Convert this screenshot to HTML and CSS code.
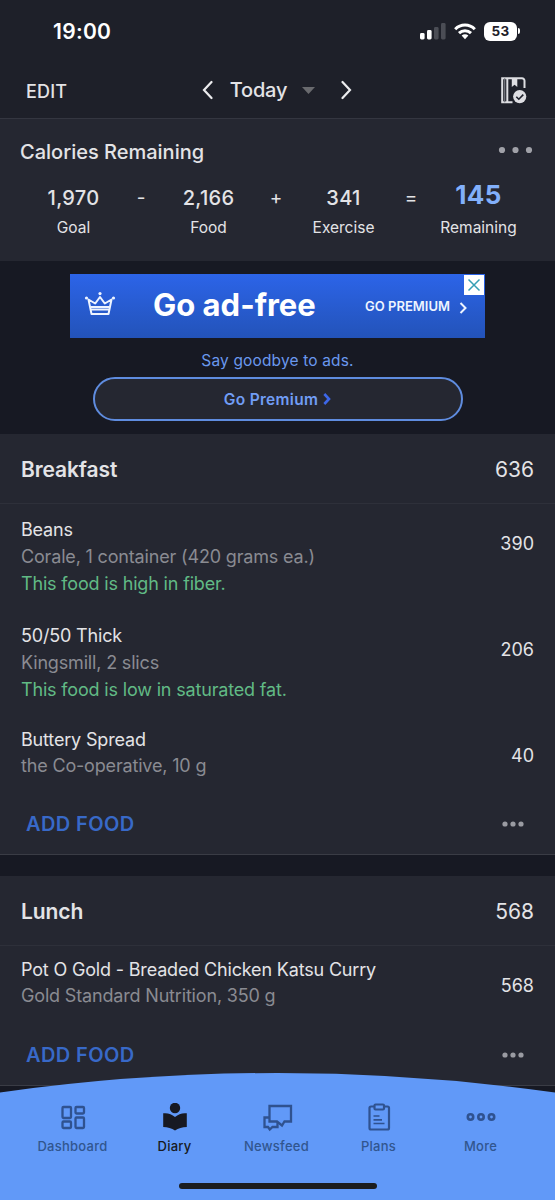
FILE: index.html
```html
<!DOCTYPE html>
<html lang="en">
<head>
    <meta charset="UTF-8">
    <meta name="viewport" content="width=device-width, initial-scale=1.0">
    <title>Diary</title>
    <link rel="stylesheet" href="styles.css">
</head>
<body>
    <div class="app">
        <header class="top">
            <div class="status-bar">
                <span class="clock">19:00</span>
                <div class="status-icons">
                    <svg width="26" height="17" viewBox="0 0 26 17">
                        <rect x="0" y="10" width="4.6" height="6.5" rx="1.4" fill="#fff"/>
                        <rect x="7" y="7" width="4.6" height="9.5" rx="1.4" fill="#fff"/>
                        <rect x="14" y="4" width="4.6" height="12.5" rx="1.4" fill="#4b4d55"/>
                        <rect x="21" y="0" width="4.6" height="16.5" rx="1.4" fill="#4b4d55"/>
                    </svg>
                    <svg class="wifi" width="22" height="17" viewBox="0 0 22 17" fill="none" stroke="#fff" stroke-width="3">
                        <path d="M1.2 6.2C6.6 .6 15.4.6 20.8 6.2"/>
                        <path d="M5 10.1C8.4 6.8 13.6 6.8 17 10.1"/>
                        <path d="M7.6 12.6c2-1.8 4.8-1.8 6.8 0L11 16.3z" fill="#fff" stroke="none"/>
                    </svg>
                    <span class="battery">53</span>
                    <span class="battery-tip"></span>
                </div>
            </div>
            <nav class="date-bar">
                <span class="edit">EDIT</span>
                <div class="date-picker">
                    <svg width="11" height="20" viewBox="0 0 11 20" fill="none" stroke="#ececee" stroke-width="2.2" stroke-linecap="round"><path d="M9.5 2 2 10l7.5 8"/></svg>
                    <span class="today">Today</span>
                    <svg class="caret" width="13" height="7" viewBox="0 0 13 7"><path d="M0 0h13L6.5 7z" fill="#696a6e"/></svg>
                    <svg width="11" height="20" viewBox="0 0 11 20" fill="none" stroke="#ececee" stroke-width="2.2" stroke-linecap="round"><path d="M1.5 2 9 10l-7.5 8"/></svg>
                </div>
                <svg class="journal" width="26" height="27" viewBox="0 0 26 27">
                    <path d="M11.5 25.200H1.200V1.200H21a2.500 2.500 0 0 1 2.500 2.500V11M6.300 1.200v24" fill="none" stroke="#dedee2" stroke-width="2"/>
                    <path d="M3.700 1.200v24" stroke="#777981" stroke-width="1.2"/>
                    <path d="M10.800 1.500h5.500v8.500l-2.750-2.300L10.800 10z" fill="#dedee2"/>
                    <circle cx="18.700" cy="19.600" r="6.600" fill="#dedee2"/>
                    <path d="m15.300 19.700 2.500 2.500 4.500-4.600" fill="none" stroke="#1f212b" stroke-width="1.600"/>
                </svg>
            </nav>
        </header>

        <section class="summary">
            <div class="summary-head">
                <h2>Calories Remaining</h2>
                <svg width="35" height="8" viewBox="0 0 35 8" fill="#a0a1a8"><circle cx="4" cy="4" r="3.1"/><circle cx="17.5" cy="4" r="3.1"/><circle cx="31" cy="4" r="3.1"/></svg>
            </div>
            <div class="equation">
                <div class="term"><b>1,970</b><span>Goal</span></div>
                <i>-</i>
                <div class="term"><b>2,166</b><span>Food</span></div>
                <i>+</i>
                <div class="term"><b>341</b><span>Exercise</span></div>
                <i>=</i>
                <div class="term total"><b>145</b><span>Remaining</span></div>
            </div>
        </section>

        <section class="promo">
            <div class="banner">
                <svg class="crown" width="32" height="26" viewBox="0 0 32 26" fill="none" stroke="#eef4ff" stroke-width="2" stroke-linejoin="round">
                    <path d="M4.500 8.500 7.500 23h17L27.500 8.500 20.800 12.500 16 6l-4.800 6.500zM7 18.500h18M7 16h18"/>
                    <g fill="#eef4ff" stroke="none"><circle cx="2.500" cy="7" r="1.600"/><circle cx="16" cy="2.600" r="1.600"/><circle cx="29.500" cy="7" r="1.600"/></g>
                </svg>
                <strong>Go ad-free</strong>
                <span class="banner-cta">GO PREMIUM</span>
                <svg class="banner-arrow" width="8" height="12" viewBox="0 0 8 12" fill="none" stroke="#eef4ff" stroke-width="2"><path d="m1.500 1 5 5-5 5"/></svg>
                <span class="close"><svg width="14" height="14" viewBox="0 0 14 14" stroke="#369fb4" stroke-width="1.5"><path d="m1.500 1.500 11 11m0-11-11 11"/></svg></span>
            </div>
            <p class="promo-text">Say goodbye to ads.</p>
            <div class="premium-button">
                <span>Go Premium</span>
                <svg width="8" height="12" viewBox="0 0 8 12" fill="none" stroke="#3d67e8" stroke-width="2.6"><path d="m1.300 1 4.700 5-4.700 5"/></svg>
            </div>
        </section>

        <section class="meal">
            <div class="meal-head"><h3>Breakfast</h3><span>636</span></div>
            <div class="food">
                <div>
                    <p class="name">Beans</p>
                    <p class="detail">Corale, 1 container (420 grams ea.)</p>
                    <p class="note">This food is high in fiber.</p>
                </div>
                <span class="kcal">390</span>
            </div>
            <div class="food">
                <div>
                    <p class="name">50/50 Thick</p>
                    <p class="detail">Kingsmill, 2 slics</p>
                    <p class="note">This food is low in saturated fat.</p>
                </div>
                <span class="kcal">206</span>
            </div>
            <div class="food short">
                <div>
                    <p class="name">Buttery Spread</p>
                    <p class="detail">the Co-operative, 10 g</p>
                </div>
                <span class="kcal">40</span>
            </div>
            <div class="meal-foot">
                <span>ADD FOOD</span>
                <svg width="22" height="6" viewBox="0 0 22 6" fill="#9a9ba2"><circle cx="3" cy="3" r="2.6"/><circle cx="11" cy="3" r="2.6"/><circle cx="19" cy="3" r="2.6"/></svg>
            </div>
        </section>

        <section class="meal lunch">
            <div class="meal-head"><h3>Lunch</h3><span>568</span></div>
            <div class="food short">
                <div>
                    <p class="name">Pot O Gold - Breaded Chicken Katsu Curry</p>
                    <p class="detail">Gold Standard Nutrition, 350 g</p>
                </div>
                <span class="kcal">568</span>
            </div>
            <div class="meal-foot">
                <span>ADD FOOD</span>
                <svg width="22" height="6" viewBox="0 0 22 6" fill="#9a9ba2"><circle cx="3" cy="3" r="2.6"/><circle cx="11" cy="3" r="2.6"/><circle cx="19" cy="3" r="2.6"/></svg>
            </div>
        </section>

        <footer class="tab-bar">
            <svg class="curve" width="555" height="127" viewBox="0 0 555 127"><path d="M0 19.500Q138 0 277.500 0T555 19.500V127H0z" fill="#6199f8"/></svg>
            <div class="tabs">
                <div class="tab">
                    <svg width="32" height="30" viewBox="0 0 32 30" fill="none" stroke="#2f5290" stroke-width="2.3">
                        <rect x="5.500" y="4" width="8.500" height="11" rx="1"/><rect x="18.500" y="4" width="8.500" height="6.500" rx="1"/>
                        <rect x="5.500" y="18.500" width="8.500" height="6.500" rx="1"/><rect x="18.500" y="14.500" width="8.500" height="10.500" rx="1"/>
                    </svg>
                    <span>Dashboard</span>
                </div>
                <div class="tab active">
                    <svg width="32" height="30" viewBox="0 0 32 30" fill="#171922">
                        <circle cx="16" cy="5" r="5.200"/>
                        <path d="M4.200 10.300Q11 9.500 16 14q5-4.500 11.800-3.700V24Q21 24 16 27.500 11 24 4.200 24z"/>
                    </svg>
                    <span>Diary</span>
                </div>
                <div class="tab">
                    <svg width="32" height="30" viewBox="0 0 32 30" fill="none" stroke="#2f5290" stroke-width="2.3">
                        <path d="M8.500 3h21.500v15.500h-6.500l-2.500 4-5-4H8.500z"/>
                        <path d="M8.500 14.500H3.500v9.500h3.500l1.800 2.500 2.700-2.500h5v-5"/>
                    </svg>
                    <span>Newsfeed</span>
                </div>
                <div class="tab">
                    <svg width="32" height="30" viewBox="0 0 32 30" fill="none" stroke="#2f5290" stroke-width="2.2">
                        <rect x="6.500" y="3.500" width="19.500" height="23" rx="1.500"/>
                        <rect x="11.500" y="1.500" width="9.500" height="5" rx="1" fill="#6199f8"/>
                        <path d="M10.500 13h6m-6 3.800h8.500m-8.500 3.700h11" stroke-width="1.700"/>
                    </svg>
                    <span>Plans</span>
                </div>
                <div class="tab">
                    <svg width="32" height="30" viewBox="0 0 32 30" fill="none" stroke="#2f5290" stroke-width="2.6"><circle cx="5.500" cy="14" r="2.700"/><circle cx="16" cy="14" r="2.700"/><circle cx="26.500" cy="14" r="2.700"/></svg>
                    <span>More</span>
                </div>
            </div>
            <div class="home-indicator"></div>
        </footer>
    </div>
</body>
</html>
```
FILE: styles.css
```css
* {
    box-sizing: border-box;
}

body {
    margin: 0;
    background: #171923;
    color: #e3e3e6;
    font-family: Inter, "Liberation Sans", sans-serif;
}

h2, h3, p {
    margin: 0;
}

svg {
    display: block;
    flex-shrink: 0;
}

.app {
    position: relative;
    width: 555px;
    height: 1200px;
    overflow: hidden;
}

/* status bar and date picker */
.top {
    height: 119px;
    background: #1e2029;
    border-bottom: 1px solid #343640;
}

.status-bar {
    display: flex;
    justify-content: space-between;
    align-items: center;
    height: 62px;
    padding: 0 35px 0 53px;
}

.clock {
    color: #fff;
    font-size: 21px;
    font-weight: 600;
    letter-spacing: 0.3px;
}

.status-icons {
    display: flex;
    align-items: center;
}

.wifi {
    margin-left: 8px;
}

.battery {
    width: 33px;
    height: 19px;
    margin-left: 8px;
    border-radius: 6px;
    background: #fff;
    color: #1e2029;
    font-size: 13.5px;
    font-weight: 700;
    letter-spacing: 0.4px;
    line-height: 19px;
    text-align: center;
}

.battery-tip {
    width: 2px;
    height: 6px;
    margin-left: 1px;
    border-radius: 0 2px 2px 0;
    background: #fff;
}

.date-bar {
    display: grid;
    grid-template-columns: 1fr auto 1fr;
    align-items: center;
    height: 56px;
    padding: 0 28px 0 26px;
}

.edit {
    padding-top: 2px;
    font-size: 18px;
    font-weight: 500;
    letter-spacing: 0.2px;
}

.date-picker {
    display: flex;
    align-items: center;
    margin-left: 1px;
}

.today {
    margin-left: 17px;
    font-size: 20px;
    font-weight: 500;
    letter-spacing: -0.2px;
}

.caret {
    margin: 0 26px 0 15px;
}

.journal {
    justify-self: end;
}

/* calories equation */
.summary {
    height: 142px;
    padding: 19px 20px 0;
    background: #252731;
}

.summary-head {
    display: flex;
    justify-content: space-between;
    align-items: center;
    height: 27px;
    padding-right: 2px;
}

.summary-head svg {
    margin-bottom: 4px;
}

.summary-head h2 {
    font-size: 20px;
    font-weight: 500;
}

.equation {
    display: grid;
    grid-template-columns: 107px 28px 107px 28px 107px 28px 107px;
    margin-top: 16px;
}

.equation i {
    font-size: 19px;
    font-style: normal;
    line-height: 34px;
    text-align: center;
}

.term {
    display: flex;
    flex-direction: column;
    align-items: center;
}

.term b {
    height: 34px;
    font-size: 20px;
    font-weight: 500;
    letter-spacing: 0.3px;
    line-height: 34px;
}

.term span {
    font-size: 15.5px;
    line-height: 25px;
}

.total b {
    color: #82b0fb;
    font-size: 26px;
    font-weight: 700;
    line-height: 28px;
}

/* ad block */
.promo {
    display: flex;
    flex-direction: column;
    align-items: center;
    height: 173px;
    padding-top: 13px;
}

.banner {
    position: relative;
    display: flex;
    align-items: center;
    width: 415px;
    height: 64px;
    padding: 0 18px 4px 14px;
    background: linear-gradient(#2c64e8, #2353b9);
    color: #eef4ff;
}

.banner strong {
    margin-left: 37px;
    color: #fff;
    font-size: 31px;
    font-weight: 700;
}

.banner-cta {
    margin-left: auto;
    padding-top: 4px;
    font-size: 13px;
    font-weight: 600;
}

.banner-arrow {
    margin: 7px 0 0 9px;
}

.close {
    position: absolute;
    top: 1px;
    right: 1px;
    padding: 3px;
    background: #fff;
}

.promo-text {
    margin-top: 13px;
    color: #6a98ee;
    font-size: 15.5px;
    letter-spacing: 0.15px;
    line-height: 20px;
}

.premium-button {
    display: flex;
    justify-content: center;
    align-items: center;
    gap: 5px;
    width: 370px;
    height: 44px;
    margin-top: 6px;
    border: 2px solid #5f8cdf;
    border-radius: 22px;
    background: #252731;
    color: #719df5;
    font-size: 15.5px;
    font-weight: 600;
    letter-spacing: 0.3px;
}

/* meals */
.meal {
    height: 421px;
    border-bottom: 1px solid #3a3c45;
    background: #252731;
}

.lunch {
    height: 210px;
    margin-top: 21px;
}

.meal-head {
    display: flex;
    justify-content: space-between;
    align-items: center;
    height: 70px;
    padding: 2px 21px 0;
    border-bottom: 1px solid #2e303a;
    font-size: 21px;
}

.meal-head h3 {
    font-size: 21px;
    font-weight: 600;
    letter-spacing: -0.1px;
}

.food {
    display: flex;
    justify-content: space-between;
    height: 106px;
    padding: 12px 21px 0;
    font-size: 18px;
    letter-spacing: -0.17px;
    line-height: 27px;
}

.detail {
    color: #8a8b92;
}

.note {
    color: #61ba85;
}

.kcal {
    padding-top: 14px;
    letter-spacing: 0;
}

.short {
    height: 94px;
    padding-top: 11px;
    line-height: 26px;
}

.short .kcal {
    padding-top: 16px;
}

.meal-foot {
    display: flex;
    justify-content: space-between;
    align-items: center;
    padding: 0 31px 0 26px;
}

.lunch .meal-foot {
    padding-top: 1px;
}

.meal-foot span {
    color: #3869c8;
    font-size: 20px;
    font-weight: 600;
    letter-spacing: 0.4px;
    line-height: 28px;
}

/* bottom tabs, drawn over the diary */
.tab-bar {
    position: absolute;
    bottom: 0;
    left: 0;
    width: 555px;
    height: 127px;
}

.curve {
    position: absolute;
    top: 0;
    left: 0;
}

.tabs {
    position: relative;
    display: grid;
    grid-template-columns: repeat(5, 102px);
    justify-content: center;
    padding: 30px 2px 0 0;
}

.tab {
    display: flex;
    flex-direction: column;
    align-items: center;
    color: #31568f;
    font-size: 13px;
    font-weight: 500;
    letter-spacing: 0.25px;
    line-height: 18px;
}

.tab span {
    margin-top: 4px;
}

.active {
    color: #171922;
}

.home-indicator {
    position: relative;
    width: 198px;
    height: 6px;
    margin: 28px auto 0;
    border-radius: 3px;
    background: #1b1d20;
}
```
